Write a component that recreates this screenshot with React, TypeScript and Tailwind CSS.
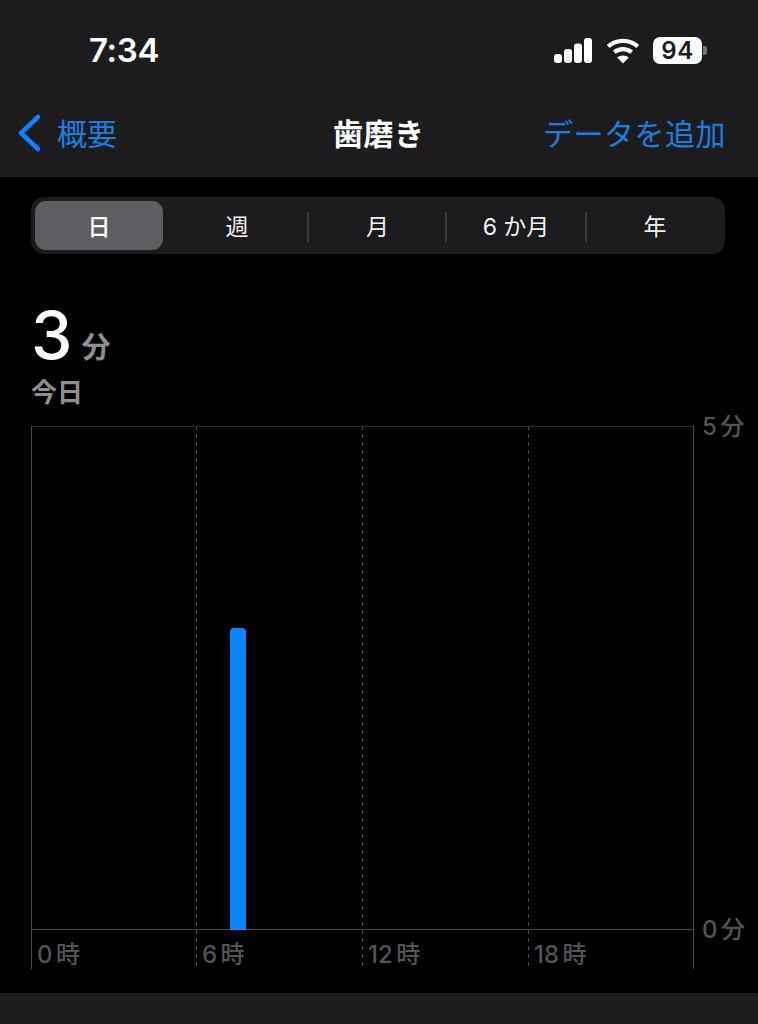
const font = { fontFamily: '"Inter", "Noto Sans CJK JP", sans-serif' }

function StatusIcons() {
  return (
    <div className="flex items-center">
      {/* signal */}
      <svg width="38" height="26" viewBox="0 0 38 26" fill="#fff">
        <rect x="0" y="16" width="8" height="9" rx="3" />
        <rect x="10" y="11" width="8" height="14" rx="3" />
        <rect x="20" y="5.5" width="8" height="19.5" rx="3" />
        <rect x="30" y="0" width="8" height="25" rx="3" />
      </svg>
      {/* wifi */}
      <svg width="34" height="26" viewBox="0 0 34 26" fill="none" className="ml-[14px]">
        <path d="M2.2 8.4C10.6 1 23.4 1 31.8 8.4" stroke="#fff" strokeWidth="4.2" />
        <path d="M8.3 14.2C13.3 10 20.7 10 25.7 14.2" stroke="#fff" strokeWidth="4.2" />
        <path d="M17 25.5L11.2 19.6C14.6 16.9 19.4 16.9 22.8 19.6Z" fill="#fff" />
      </svg>
      {/* battery */}
      <div className="ml-[13px] flex items-center">
        <div className="flex h-[27px] w-[49px] items-center justify-center rounded-[7px] bg-white text-[24px] leading-none font-semibold tracking-[0.5px] text-[#1c1c1e]">
          94
        </div>
        <div className="ml-[1px] h-[9px] w-[4px] rounded-r-[3px] bg-[#77777a]" />
      </div>
    </div>
  )
}

function Segment({ label, active, divider, inset = 'pl-[3px]' }: { label: string; active?: boolean; divider?: boolean; inset?: string }) {
  return (
    <div className="relative flex h-full flex-1 items-center justify-center">
      {divider && <div className="absolute top-[11px] right-[-1px] h-[30px] w-[2px] bg-[#3a3a3c]" />}
      <div
        className={`flex h-full w-full items-center justify-center rounded-[11px] pt-[3px] text-[23px] leading-none ${
          active ? 'bg-[#5e5e62] font-medium text-white' : inset + ' text-[#f2f2f2]'
        }`}
      >
        {label}
      </div>
    </div>
  )
}

const dashed =
  'bg-[repeating-linear-gradient(to_bottom,#4a4a4c_0_4px,transparent_4px_8px)] bg-[length:1px_100%] bg-no-repeat'

function HourColumn({ label, first, last, bar }: { label: string; first?: boolean; last?: boolean; bar?: boolean }) {
  return (
    <div
      className={`flex flex-col ${first ? 'w-[165px] border-l border-[#48484a]' : 'w-[166px] ' + dashed} ${
        last ? 'border-r border-[#48484a]' : ''
      }`}
    >
      <div className="flex h-[504px] items-end border-t border-b border-t-[#2f2f31] border-b-[#48484a] pl-[34px]">
        {bar && <div className="-mb-px h-[302px] w-[16px] rounded-t-[4px] bg-[#0a84ff]" />}
      </div>
      <div
        className={`h-[39px] pt-[11px] text-[24px] leading-[27px] font-medium [word-spacing:-3px] text-[#545458] ${
          first ? 'pl-[5px]' : 'pl-[6px]'
        }`}
      >
        {label}
      </div>
    </div>
  )
}

export default function App() {
  return (
    <div className="flex h-[1024px] w-[758px] flex-col overflow-hidden bg-black" style={font}>
      {/* status + nav */}
      <header className="flex h-[177px] flex-col bg-[#1c1c1e] px-[17px]">
        <div className="flex h-[100px] items-start justify-between pt-[24px] pr-[34px] pl-[72px]">
          <span className="text-[33px] leading-[52px] font-semibold tracking-[-0.3px] text-white">7:34</span>
          <div className="pt-[13px]">
            <StatusIcons />
          </div>
        </div>
        <div className="relative flex h-[62px] items-center justify-between">
          <div className="flex items-center text-[#1b7fe0]">
            <svg width="24" height="38" viewBox="0 0 24 38" fill="none" className="mt-[4px]">
              <path d="M21 3L4 19l17 16" stroke="#0a84ff" strokeWidth="4.5" strokeLinecap="round" strokeLinejoin="round" />
            </svg>
            <span className="ml-[16px] pt-[5px] text-[30px] leading-none">概要</span>
          </div>
          <span className="absolute left-[316px] pt-[5px] text-[30px] leading-none font-bold tracking-[0.5px] text-white">歯磨き</span>
          <span className="mr-[15px] pt-[5px] text-[30px] leading-none tracking-[0.5px] text-[#1b7fe0]">データを追加</span>
        </div>
      </header>

      <main className="flex-1 pt-[20px] pl-[31px]">
        {/* range picker */}
        <div className="flex h-[57px] w-[694px] rounded-[13px] bg-[#1c1c1e] p-[4px]">
          <div className="w-[128px]">
            <Segment label="日" active />
          </div>
          <div className="flex flex-1">
            <div className="w-[145px]">
              <Segment label="週" divider />
            </div>
            <div className="w-[138px]">
              <Segment label="月" divider inset="pl-[1px]" />
            </div>
            <div className="w-[140px]">
              <Segment label="6 か月" divider inset="pl-0" />
            </div>
            <div className="flex-1">
              <Segment label="年" />
            </div>
          </div>
        </div>

        {/* summary */}
        <div className="mt-[46px] flex h-[70px] items-end">
          <span className="text-[66px] leading-[70px] font-medium text-white">3</span>
          <span className="mb-[2px] ml-[9px] text-[29px] leading-[40px] font-bold text-[#8e8e93]">分</span>
        </div>
        <div className="mt-[5px] text-[26px] leading-[36px] font-bold text-[#8e8e93]">今日</div>

        {/* chart */}
        <div className="mt-[15px] flex">
          <HourColumn label="0 時" first />
          <HourColumn label="6 時" bar />
          <HourColumn label="12 時" />
          <HourColumn label="18 時" last />
          <div className="-mt-[13px] ml-[8px] flex h-[530px] flex-col justify-between text-[24px] leading-[27px] font-medium [word-spacing:-3px] text-[#545458]">
            <span>5 分</span>
            <span>0 分</span>
          </div>
        </div>
      </main>

      <footer className="h-[31px] bg-[#1c1c1e]" />
    </div>
  )
}
